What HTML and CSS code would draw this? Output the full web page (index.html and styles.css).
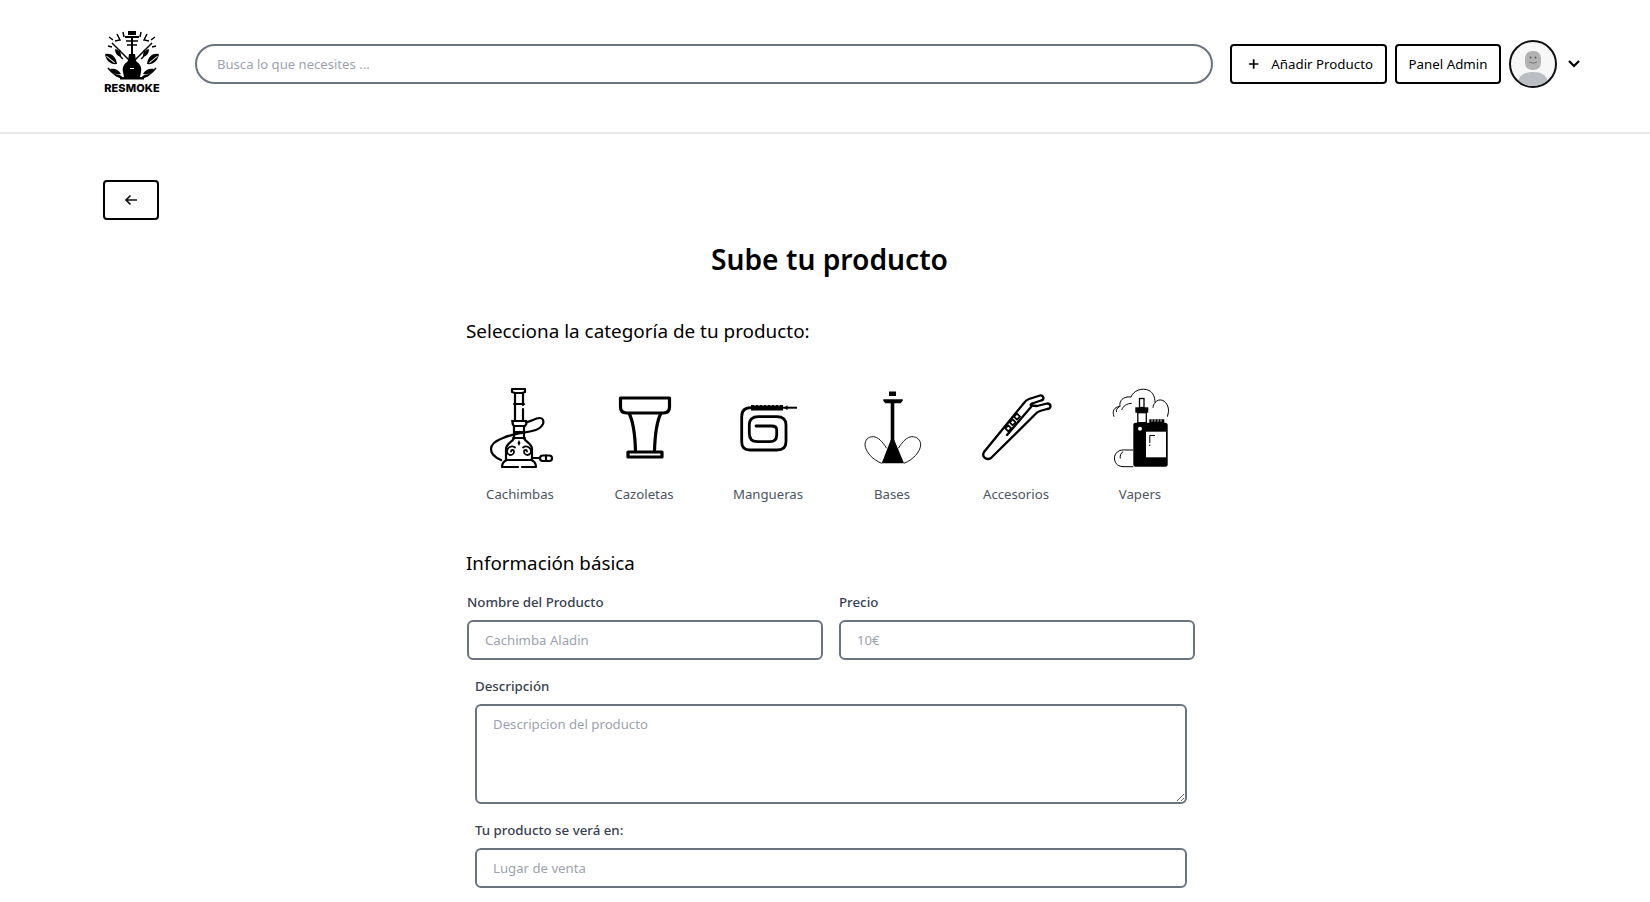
FILE: index.html
```html
<!DOCTYPE html>
<html lang="es">
<head>
<meta charset="utf-8">
<title>Resmoke - Sube tu producto</title>
<link rel="stylesheet" href="styles.css">
</head>
<body>

<header class="topbar">
  <a class="logo" href="#">
    <svg class="logo-mark" viewBox="0 0 58 52" width="58" height="52">
      <!-- emblema -->
      <rect x="25" y="1" width="8" height="4"/>
      <rect x="22" y="6" width="14" height="2"/>
      <path d="M29 8V24" stroke="#000" stroke-width="2" fill="none"/>
      <path d="M23 11h12M24 15h10" stroke="#000" stroke-width="1.500"/>
      <path d="M26 24h6l1 7c4 3 6 6 5 11l-1 5H21l-1-5c-1-5 1-8 5-11z"/>
      <path d="M17 47h24v2.500H17z"/>
      <g stroke="#000" stroke-width="1.500" fill="none">
        <path d="M9 13l17 17M49 13L32 30"/>
        <path d="M14 4l3 6-5 1M44 4l-3 6 5 1M6 7l4 3M52 7l-4 3M20 2l1 5M38 2l-1 5M9 17l-4-1M49 17l4-1"/>
        <path d="M5 38c4 5 9 9 15 10M53 38c-4 5-9 9-15 10"/>
        <path d="M17 20c-1 4 0 7 3 9M41 20c1 4 0 7-3 9"/>
      </g>
      <path d="M2 24c6-1 11 2 12 10-6 1-11-3-12-10zM56 24c-6-1-11 2-12 10 6 1 11-3 12-10z"/>
      <path d="M7 39c5-1 9 1 11 5-5 1-9-1-11-5zM51 39c-5-1-9 1-11 5 5 1 9-1 11-5z"/>
      <path d="M12 19c4 1 6 4 6 8-4-1-6-4-6-8zM46 19c-4 1-6 4-6 8 4-1 6-4 6-8z"/>
      <path d="M12 45c3-1 6 0 7 2-3 1-6 0-7-2zM46 45c-3-1-6 0-7 2 3 1 6 0 7-2z"/>
      <g fill="#fff">
        <path d="M4 26l8 6.500-.8.5-8-6.500zM54 26l-8 6.500.8.5 8-6.500z"/>
        <rect x="27" y="38" width="4" height="1"/>
      </g>
    </svg>
    <span class="logo-name">RESMOKE</span>
  </a>

  <input class="search" type="text" placeholder="Busca lo que necesites ...">

  <button class="btn btn-add">
    <svg viewBox="0 0 12 12" width="12" height="12"><path d="M6 1v10M1 6h10" stroke="#000" stroke-width="1.800" fill="none"/></svg>
    Añadir Producto
  </button>
  <button class="btn btn-admin">Panel Admin</button>

  <div class="avatar">
    <svg viewBox="0 0 44 44" width="44" height="44">
      <rect x="14" y="9" width="16" height="19" rx="7" fill="#b3b3b3"/>
      <circle cx="19.500" cy="15.500" r=".9" fill="#555"/>
      <circle cx="24.500" cy="15.500" r=".9" fill="#555"/>
      <path d="M18 20c2.500 1.300 5.500 1.300 8 0" stroke="#666" stroke-width=".8" fill="none"/>
      <path d="M7 40c1-7 7-10 15-10s14 3 15 10c-4 3-9 4-15 4s-11-1-15-4z" fill="#bbbec2"/>
    </svg>
  </div>
  <svg class="chevron" viewBox="0 0 14 10" width="14" height="10"><path d="M2 2l5 5 5-5" stroke="#000" stroke-width="2.200" fill="none"/></svg>
</header>

<main class="page">
  <button class="btn btn-back">
    <svg viewBox="0 0 14 12" width="14" height="12"><path d="M13 6H2M6.500 1.500L2 6l4.500 4.500" stroke="#111" stroke-width="1.700" fill="none"/></svg>
  </button>

  <h1 class="title">Sube tu producto</h1>

  <section class="form">
    <h2 class="pick-title">Selecciona la categoría de tu producto:</h2>

    <ul class="cats">
      <li class="cat">
        <svg viewBox="-5 0 90 90" width="90" height="90">
          <g fill="none" stroke="#000" stroke-width="2.200" stroke-linecap="round" stroke-linejoin="round">
            <path d="M32 9h13v3l-3 1h-7l-3-1z"/>
            <path d="M35 13v27M43 13v12M43 29v11M34 24h10"/>
            <path d="M32 41h14M33 41c-1 2 0 4 1 5h11c1-1 2-3 1-5"/>
            <path d="M34 46v11M44 46v11M34 52h10M33 58h12"/>
            <path d="M34 58c0 3-8 5-8 11v11M44 58c0 3 8 5 8 11v11"/>
            <path d="M26 80h26M22 87c0-3 2-6 5-7M56 87c0-3-2-6-5-7M22 87h16M42 87h14"/>
            <path d="M46 42c5 0 8-4 14-4 3 0 4 3 3 6-2 4-5 6-11 7-9 2-21 3-29 7-8 3-12 7-12 11 0 4 3 8 10 11"/>
            <path d="M52 78h8"/>
            <rect x="60" y="75.500" width="12" height="5.500" rx="2.700"/>
            <path d="M66 75.500v5.500"/>
          </g>
          <g fill="none" stroke="#000" stroke-width="1.800" stroke-linecap="round">
            <path d="M31 71.500a1.500 1.500 0 0 1 3 0 3.500 3.500 0 0 1-7 0 5 5 0 0 1 8-4"/>
            <path d="M47 71.500a1.500 1.500 0 0 0-3 0 3.500 3.500 0 0 0 7 0 5 5 0 0 0-8-4"/>
          </g>
          <path d="M39 60l1.500 3-1.500 3-1.500-3z"/>
        </svg>
        <span>Cachimbas</span>
      </li>
      <li class="cat">
        <svg viewBox="0 0 90 90" width="90" height="90">
          <g fill="none" stroke="#000" stroke-width="3.200" stroke-linejoin="round">
            <path d="M21.500 18h49v9c0 4-2 6-6 6H27.500c-4 0-6-2-6-6z"/>
            <path d="M30 33c4 8 6 20 6.500 38M62 33c-4 8-6 20-6.500 38"/>
            <rect x="29" y="72" width="34" height="5"/>
          </g>
        </svg>
        <span>Cazoletas</span>
      </li>
      <li class="cat">
        <svg viewBox="0 0 90 90" width="90" height="90">
          <path fill="none" stroke="#000" stroke-width="2.800" stroke-linejoin="round" stroke-linecap="round" d="M28 27.700Q18.700 27.700 18.700 36.700V61.700Q18.700 70 27 70H53.700Q63 70 63 61.700V45Q63 36.700 53.700 36.700H35.300Q26.300 36.700 26.300 45V53.300Q26.300 61.700 34.300 61.700H47Q53.700 61.700 53.700 55V50Q53.700 46 48.700 46H33"/>
          <rect x="28" y="25" width="32" height="5.500"/>
          <path d="M32 24.500v1.500M36 24.500v1.500M40 24.500v1.500M44 24.500v1.500M48 24.500v1.500M52 24.500v1.500M56 24.500v1.500" stroke="#fff" stroke-width="1"/>
          <path d="M60 27.700h14" stroke="#000" stroke-width="2"/>
          <path d="M61 27.700l3.500-2.500v5z"/>
        </svg>
        <span>Mangueras</span>
      </li>
      <li class="cat">
        <svg viewBox="0 0 90 90" width="90" height="90">
          <rect x="42" y="11.500" width="7" height="4.500"/>
          <path d="M36.300 19.300h19.400v1.500l-2 2.500H38.300l-2-2.500z"/>
          <rect x="43.700" y="23" width="3.600" height="38"/>
          <path d="M43.700 60h3.600L57 83.300H34.700z"/>
          <path d="M39.700 68.300C35 61 31 57 26.300 56.700 21 56.500 18 60 18 65c.5 7 8 15 16.700 18.300M51.300 68.300C56 61 60 57 64.700 56.700 70 56.500 73.700 60 73.700 65c-.5 7-8 15-16.700 18.300" fill="none" stroke="#000" stroke-width=".9"/>
        </svg>
        <span>Bases</span>
      </li>
      <li class="cat">
        <svg viewBox="0 0 90 90" width="90" height="90">
          <g fill="none" stroke="#000" stroke-width="2.300" stroke-linejoin="round" stroke-linecap="round">
            <path d="M13 72L53 23Q55 20 58 19L69 15.500Q72 15 72.500 18Q72.500 20 70 20.500L61 23.500Q59 24.500 60 25.500L66 26L76 23.500Q79.500 23.500 79.500 26.500Q79 29 76 29L69 31Q66 32 64 34.500L20 78Q17 80 14 78Q11 76 13 72Z"/>
            <path d="M60 27L36 55"/>
            <path d="M37.300 45.300l3 3-3 3-3-3zM41.700 39.300l3 3-3 3-3-3zM46 33.700l3 3-3 3-3-3z" fill="#fff" stroke-width="1.800"/>
          </g>
        </svg>
        <span>Accesorios</span>
      </li>
      <li class="cat">
        <svg viewBox="0 0 90 90" width="90" height="90">
          <g fill="none" stroke="#000" stroke-width="1">
            <path d="M19 36.700C17 31 19 27 25 26.500 24 21 28 16 36 17 38 11 47 7 54 10.500 58 12.500 60 17 60 22.700 64 17.500 71 20 73 27c1 3 .5 6-.7 9.700"/>
            <path d="M26.700 30C28 26 32 23.500 36.700 23.300M60 22.700c-1 1-2 3-2 5M24 27c-2 1-3 3-2.500 5"/>
            <path d="M38.300 70H31C24 69 19 73 19.500 79c.5 5 4 7.700 9.500 7.700h9.300M28.300 71.500c-2.500 1.500-3.500 4-3 7"/>
          </g>
          <rect x="44.500" y="18.500" width="4.500" height="9" fill="#fff" stroke="#000" stroke-width="1.300"/>
          <rect x="40.300" y="27.300" width="13" height="5.400"/>
          <rect x="42.800" y="32.700" width="8.500" height="10" fill="#fff" stroke="#000" stroke-width="1.300"/>
          <path d="M38.300 45c0-1.500 1-2.300 2.300-2.300H54.300v-3.400h15v3.400h1c1.500 0 2.400 1 2.400 2.300v39.500c0 1.500-1 2.200-2.200 2.200H40.500c-1.300 0-2.200-1-2.200-2.200z"/>
          <path d="M57 39.300v2.500M60 39.300v2.500M63 39.300v2.500M66 39.300v2.500" stroke="#fff" stroke-width=".8"/>
          <circle cx="45" cy="48.700" r="2" fill="#fff"/>
          <rect x="51" y="51.700" width="20" height="25.600" fill="#fff"/>
          <path d="M60 55.500h-5.200v7.500M54.800 64.500v1.500" fill="none" stroke="#000" stroke-width="1"/>
        </svg>
        <span>Vapers</span>
      </li>
    </ul>

    <h2 class="info-title">Información básica</h2>

    <div class="row">
      <div class="field">
        <label>Nombre del Producto</label>
        <input class="input" type="text" placeholder="Cachimba Aladin">
      </div>
      <div class="field">
        <label>Precio</label>
        <input class="input" type="text" placeholder="10€">
      </div>
    </div>

    <div class="field field-wide">
      <label>Descripción</label>
      <textarea class="input area" placeholder="Descripcion del producto"></textarea>
    </div>

    <div class="field field-wide">
      <label>Tu producto se verá en:</label>
      <input class="input" type="text" placeholder="Lugar de venta">
    </div>
  </section>
</main>

</body>
</html>
```

FILE: styles.css
```css
* { box-sizing: border-box; }
html, body { margin: 0; padding: 0; background: #fff; }
body { font-family: "Noto Sans", "Open Sans", sans-serif; color: #000; overflow: hidden; height: 902px; }
h1, h2, ul { margin: 0; padding: 0; font-weight: 400; }
ul { list-style: none; }

/* cabecera */
.topbar { display: flex; align-items: center; height: 134px; padding: 0 69px 4px 103px; border-bottom: 2px solid #e8e8e8; }
.logo { display: flex; flex-direction: column; align-items: center; width: 58px; margin: 0 34px 5px 0; text-decoration: none; color: #000; }
.logo-mark { display: block; }
.logo-name { font-family: "Inter", sans-serif; font-weight: 800; font-size: 11px; line-height: 12px; letter-spacing: .1px; }
.search { flex: 1; height: 40px; min-width: 0; padding: 0 20px; border: 2px solid #6b7280; border-radius: 20px; font: 13.1px "Noto Sans", sans-serif; outline: none; }
.search::placeholder, .input::placeholder { color: #9ca3af; opacity: 1; }

.btn { display: flex; align-items: center; justify-content: center; height: 40px; padding: 0 12px; border: 2px solid #000; border-radius: 4px; background: #fff; color: #000; font: 13.3px "Noto Sans", sans-serif; white-space: nowrap; }
.btn-add { gap: 12px; width: 157px; margin-left: 17px; margin-right: 8px; padding: 0 12px 0 16px; }
.btn-admin { width: 106px; }
.avatar { width: 48px; height: 48px; margin-left: 8px; border: 2px solid #111; border-radius: 50%; background: #f6f7f6; overflow: hidden; }
.avatar svg { display: block; }
.chevron { margin-left: 10px; }

/* contenido */
.page { padding: 46px 0 0 103px; }
.btn-back { width: 56px; }
.title { width: 1453px; margin-top: 19px; font-size: 28.2px; font-weight: 600; line-height: 40px; text-align: center; }
.form { width: 730px; margin: 38px 0 0 363px; }
.pick-title { font-size: 18.9px; line-height: 28px; }
.cats { display: flex; margin: 35px 0 0 -8px; }
.cat { display: flex; flex: none; flex-direction: column; align-items: center; width: 124px; font-size: 13.2px; line-height: 20px; color: #4b5563; }
.cat svg { display: block; margin-bottom: 14px; }
.info-title { margin-top: 45px; font-size: 18.8px; line-height: 28px; }

.row { display: flex; gap: 16px; margin-top: 15px; padding-left: 1px; }
.row .field { width: 356px; }
.field label { display: block; margin-bottom: 8px; font-size: 13.3px; font-weight: 500; line-height: 20px; color: #374151; }
.field-wide { margin: 16px 0 0 9px; width: 712px; }
.input { display: block; width: 100%; height: 40px; padding: 0 16px; border: 2px solid #6b7280; border-radius: 6px; background: #fff; font: 13.2px "Noto Sans", sans-serif; outline: none; }
.area { height: 100px; padding: 8px 16px; line-height: 20px; resize: vertical; }
```
